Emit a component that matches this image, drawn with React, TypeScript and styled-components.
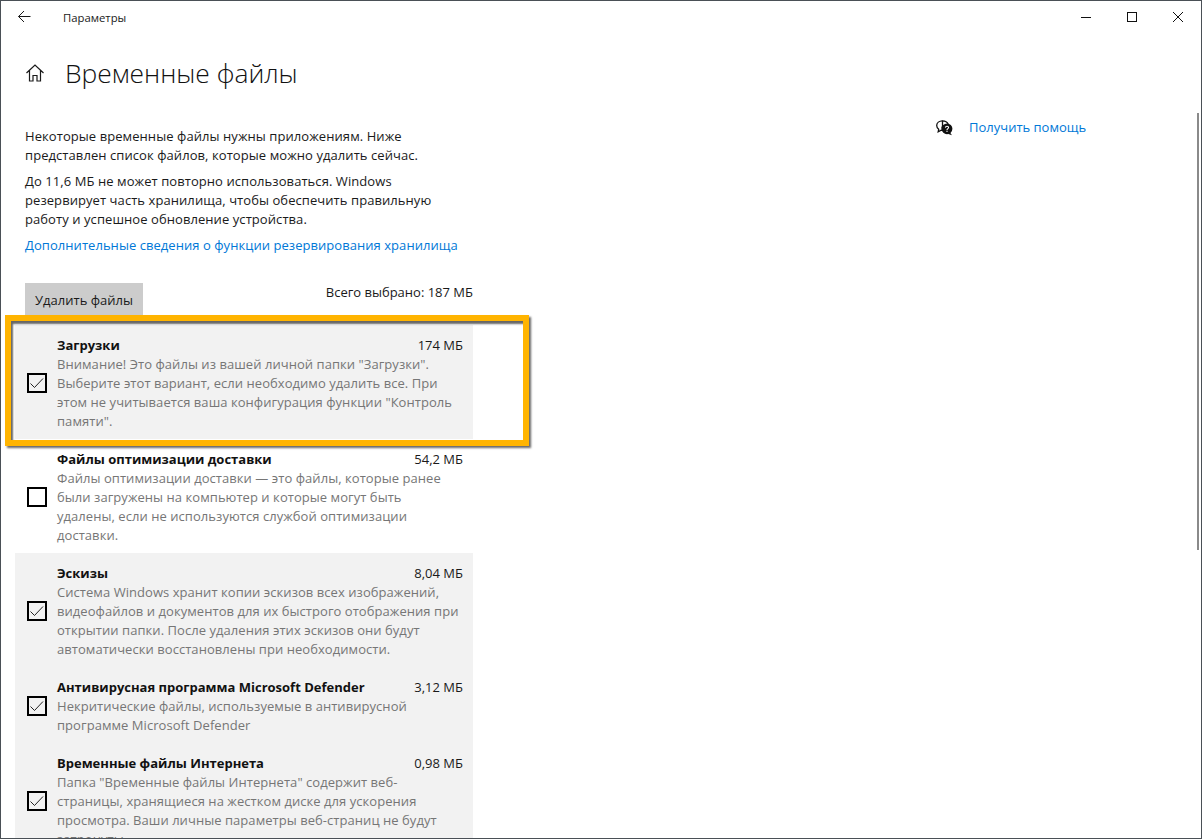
import { createGlobalStyle, styled } from "styled-components";

const GlobalStyle = createGlobalStyle`
  html, body {
    margin: 0;
    padding: 0;
    height: 100%;
    overflow: hidden;
    background: #fff;
  }
  body {
    font-family: "Open Sans", "Noto Sans", "Liberation Sans", sans-serif;
    color: #1a1a1a;
  }
`;

const files = [
  {
    name: "Загрузки",
    size: "174 МБ",
    checked: true,
    lines: [
      'Внимание! Это файлы из вашей личной папки "Загрузки".',
      "Выберите этот вариант, если необходимо удалить все. При",
      'этом не учитывается ваша конфигурация функции "Контроль',
      'памяти".',
    ],
  },
  {
    name: "Файлы оптимизации доставки",
    size: "54,2 МБ",
    checked: false,
    lines: [
      "Файлы оптимизации доставки — это файлы, которые ранее",
      "были загружены на компьютер и которые могут быть",
      "удалены, если не используются службой оптимизации",
      "доставки.",
    ],
  },
  {
    name: "Эскизы",
    size: "8,04 МБ",
    checked: true,
    lines: [
      "Система Windows хранит копии эскизов всех изображений,",
      "видеофайлов и документов для их быстрого отображения при",
      "открытии папки. После удаления этих эскизов они будут",
      "автоматически восстановлены при необходимости.",
    ],
  },
  {
    name: "Антивирусная программа Microsoft Defender",
    size: "3,12 МБ",
    checked: true,
    lines: [
      "Некритические файлы, используемые в антивирусной",
      "программе Microsoft Defender",
    ],
  },
  {
    name: "Временные файлы Интернета",
    size: "0,98 МБ",
    checked: true,
    lines: [
      'Папка "Временные файлы Интернета" содержит веб-',
      "страницы, хранящиеся на жестком диске для ускорения",
      "просмотра. Ваши личные параметры веб-страниц не будут",
      "затронуты.",
    ],
  },
];

export default function App() {
  return (
    <>
      <GlobalStyle />
      <Window>
        <TitleBar>
          <BackButton aria-label="Назад">
            <svg width="16" height="14" viewBox="0 0 16 14" fill="none" stroke="#1a1a1a" strokeWidth="1">
              <path d="M13.5 6.5H1.5M7 1L1.5 6.5L7 12" />
            </svg>
          </BackButton>
          <AppName>Параметры</AppName>
          <WindowControls>
            <ControlButton aria-label="Свернуть">
              <svg width="12" height="12" viewBox="0 0 12 12" fill="none" stroke="#111" strokeWidth="1">
                <path d="M1 6.5H11" />
              </svg>
            </ControlButton>
            <ControlButton aria-label="Развернуть">
              <svg width="12" height="12" viewBox="0 0 12 12" fill="none" stroke="#111" strokeWidth="1">
                <rect x="1.5" y="1.5" width="9" height="9" />
              </svg>
            </ControlButton>
            <ControlButton aria-label="Закрыть">
              <svg width="12" height="12" viewBox="0 0 12 12" fill="none" stroke="#111" strokeWidth="1">
                <path d="M1 1L11 11M11 1L1 11" />
              </svg>
            </ControlButton>
          </WindowControls>
        </TitleBar>

        <PageHeader>
          <HomeIcon width="20" height="20" viewBox="0 0 20 20" fill="none" stroke="#1a1a1a" strokeWidth="1.2">
            <path d="M1.5 10L10 2L18.5 10M4.5 7.5V18H8V12.5H12V18H15.5V7.5" />
          </HomeIcon>
          <PageTitle>Временные файлы</PageTitle>
        </PageHeader>

        <Content>
          <LeftColumn>
            <Paragraph>
              Некоторые временные файлы нужны приложениям. Ниже
              <br />
              представлен список файлов, которые можно удалить сейчас.
            </Paragraph>
            <Paragraph>
              До 11,6 МБ не может повторно использоваться. Windows
              <br />
              резервирует часть хранилища, чтобы обеспечить правильную
              <br />
              работу и успешное обновление устройства.
            </Paragraph>
            <StorageLink href="#">Дополнительные сведения о функции резервирования хранилища</StorageLink>

            <ActionRow>
              <DeleteButton>Удалить файлы</DeleteButton>
              <TotalSize>Всего выбрано: 187 МБ</TotalSize>
            </ActionRow>

            <FileList>
              {files.map((file) => (
                <FileRow key={file.name} $shaded={file.checked}>
                  <CheckBox>
                    {file.checked && (
                      <svg width="16" height="16" viewBox="0 0 16 16" fill="none" stroke="#222" strokeWidth="1">
                        <path d="M1.5 8.5L5.5 12.5L14 3.5" />
                      </svg>
                    )}
                  </CheckBox>
                  <FileInfo>
                    <FileHead>
                      <FileName>{file.name}</FileName>
                      <FileSize>{file.size}</FileSize>
                    </FileHead>
                    <FileText>
                      {file.lines.map((line) => (
                        <span key={line}>{line}</span>
                      ))}
                    </FileText>
                  </FileInfo>
                </FileRow>
              ))}
              <Highlight />
            </FileList>
          </LeftColumn>

          <HelpLink href="#">
            <svg width="18" height="16" viewBox="0 0 18 16">
              <path
                d="M6.5 0.8C3.2 0.8 0.7 2.9 0.7 5.6C0.7 7.1 1.5 8.4 2.7 9.3L2.2 11.8L5.2 10.2C5.6 10.3 6 10.3 6.5 10.3"
                fill="none"
                stroke="#111"
                strokeWidth="1.3"
              />
              <path d="M6.5 0.8C9 0.8 11.3 2 12.1 4L6 7L6.5 10.3Z" fill="none" stroke="#111" strokeWidth="1.3" />
              <circle cx="11" cy="8.8" r="5.4" fill="#111" />
              <path d="M14 12.5L16 15.3L11.5 13.8Z" fill="#111" />
              <path d="M9.4 7.6C9.5 6.7 10.2 6.3 11 6.3C11.9 6.3 12.6 6.9 12.6 7.6C12.6 8.6 11 8.7 11 9.9" fill="none" stroke="#fff" strokeWidth="1.1" />
              <rect x="10.4" y="10.7" width="1.2" height="1.2" fill="#fff" />
            </svg>
            <span>Получить помощь</span>
          </HelpLink>
        </Content>

        <ScrollThumb />
      </Window>
    </>
  );
}

const Window = styled.div`
  position: relative;
  box-sizing: border-box;
  width: 1202px;
  height: 839px;
  overflow: hidden;
  background: #fff;
  border: 1px solid #4a5056;
`;

const TitleBar = styled.div`
  display: flex;
  align-items: center;
  height: 32px;
`;

const BackButton = styled.button`
  display: flex;
  align-items: center;
  justify-content: center;
  width: 48px;
  height: 32px;
  padding: 0;
  border: none;
  background: none;
`;

const AppName = styled.div`
  margin-left: 14px;
  font-size: 11.3px;
`;

const WindowControls = styled.div`
  display: flex;
  margin-left: auto;
`;

const ControlButton = styled.button`
  display: flex;
  align-items: center;
  justify-content: center;
  width: 46px;
  height: 32px;
  padding: 0;
  border: none;
  background: none;
`;

const PageHeader = styled.header`
  display: flex;
  align-items: center;
  gap: 20px;
  height: 48px;
  margin-top: 16px;
  padding-left: 24px;
`;

const HomeIcon = styled.svg`
  flex: none;
`;

const PageTitle = styled.h1`
  margin: 0;
  font-size: 26.4px;
  font-weight: 300;
  color: #111;
`;

const Content = styled.main`
  display: flex;
  margin-top: 19px;
  padding-left: 24px;
`;

const LeftColumn = styled.div`
  display: flex;
  flex-direction: column;
  width: 448px;
  padding-top: 11px;
`;

const Paragraph = styled.p`
  margin: 0 0 7px;
  font-size: 13px;
  line-height: 19px;
  letter-spacing: 0.07px;
  white-space: nowrap;
`;

const StorageLink = styled.a`
  font-size: 13px;
  line-height: 19px;
  letter-spacing: 0.05px;
  white-space: nowrap;
  color: #0078d7;
  text-decoration: none;
`;

const ActionRow = styled.div`
  display: flex;
  justify-content: space-between;
  margin-top: 28px;
`;

const DeleteButton = styled.button`
  width: 118px;
  height: 33px;
  padding: 0;
  border: none;
  background: #ccc;
  font-family: inherit;
  font-size: 13px;
  color: #1a1a1a;
`;

const TotalSize = styled.div`
  font-size: 13px;
  line-height: 19px;
`;

const FileList = styled.div`
  position: relative;
  display: flex;
  flex-direction: column;
  margin: 9px 0 0 -10px;
`;

const FileRow = styled.div<{ $shaded: boolean }>`
  display: flex;
  align-items: center;
  gap: 10px;
  padding: 10px 10px 8px 12px;
  background: ${(p) => (p.$shaded ? "#f2f2f2" : "#fff")};
`;

const CheckBox = styled.div`
  flex: none;
  display: flex;
  align-items: center;
  justify-content: center;
  box-sizing: border-box;
  width: 20px;
  height: 20px;
  border: 2px solid #000;
`;

const FileInfo = styled.div`
  flex: 1;
  min-width: 0;
`;

const FileHead = styled.div`
  display: flex;
  justify-content: space-between;
  font-size: 13px;
  line-height: 20px;
`;

const FileName = styled.div`
  font-weight: 700;
  color: #111;
`;

const FileSize = styled.div`
  color: #1a1a1a;
`;

const FileText = styled.div`
  display: flex;
  flex-direction: column;
  font-size: 13px;
  line-height: 19px;
  letter-spacing: 0.05px;
  white-space: nowrap;
  color: #767676;
`;

const Highlight = styled.div`
  position: absolute;
  top: -10px;
  left: -10px;
  box-sizing: border-box;
  width: 524px;
  height: 131px;
  border: 6px solid #ffb400;
  box-shadow: 2px 2px 2px rgba(0, 0, 0, 0.6), inset 2px 3px 2px rgba(0, 0, 0, 0.6);
  pointer-events: none;
`;

const HelpLink = styled.a`
  display: flex;
  align-items: center;
  align-self: flex-start;
  gap: 15px;
  margin-left: 463px;
  margin-top: 2px;
  font-size: 13px;
  line-height: 19px;
  color: #0078d7;
  text-decoration: none;
`;

const ScrollThumb = styled.div`
  position: absolute;
  top: 112px;
  right: 2px;
  width: 2px;
  height: 437px;
  background: #8a8a8a;
`;
